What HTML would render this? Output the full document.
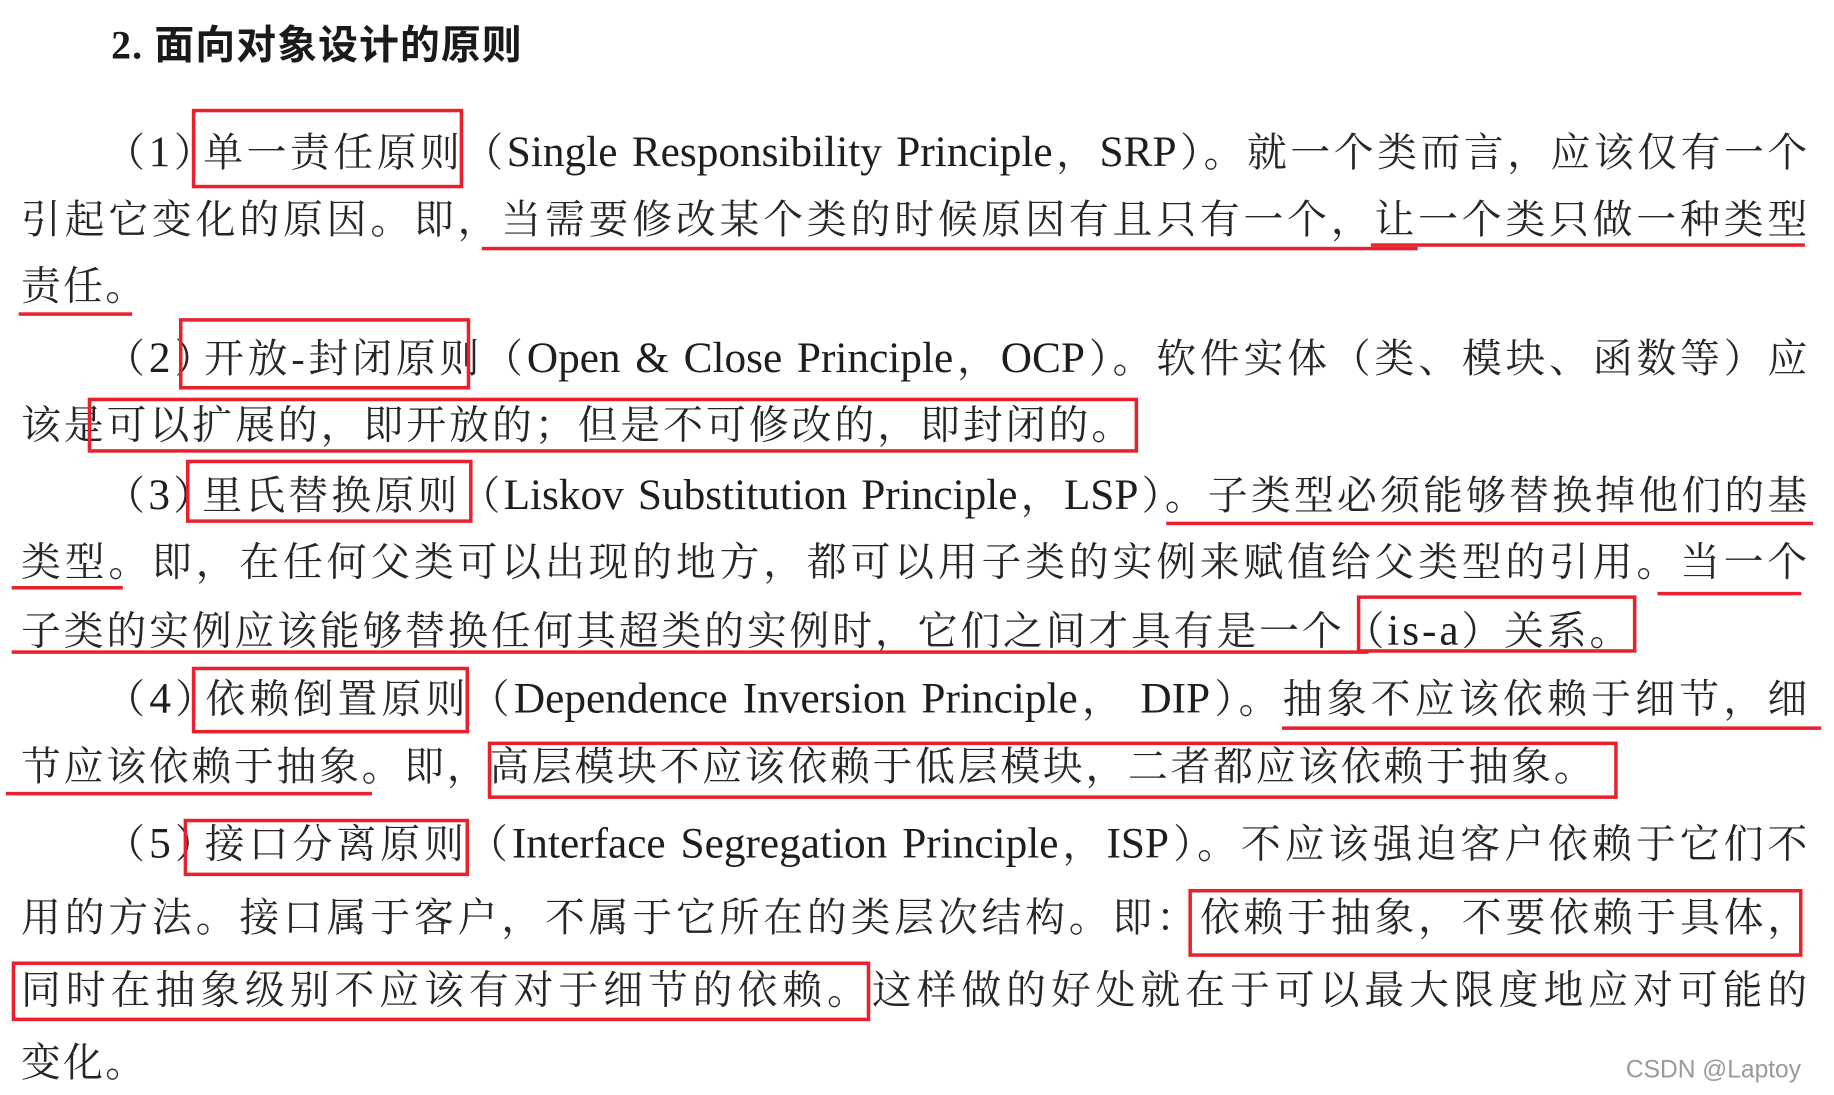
<!DOCTYPE html>
<html><head><meta charset="utf-8"><style>
html,body{margin:0;padding:0;background:#fff;width:1834px;height:1095px;overflow:hidden}
#s{position:absolute;left:0;top:0;width:1568px;height:936px;transform:scale(1.1697);transform-origin:0 0}
.l{position:absolute;font-family:"Liberation Serif","Noto Serif CJK SC",serif;font-size:34px;color:#262626;line-height:40px;white-space:nowrap;letter-spacing:0}
.j{text-align:justify;text-align-last:justify;white-space:normal;height:40px;overflow:visible}
.e{font-size:37px;color:#1e1e1e}
.p{margin-right:-12px}
.b{position:absolute;border:3px solid #e8222c;box-sizing:border-box}
.u{position:absolute;height:3px;background:#e8222c}
</style></head><body><div id="s">
<div class="l" style="left:95px;top:20px;font-weight:bold;font-size:34px;font-family:'Liberation Serif','Noto Sans CJK SC',serif;color:#1a1a1a;letter-spacing:1px">2. 面向对象设计的原则</div>

<div class="l j" style="left:90px;top:111px;width:1455px">（<span class="e">1</span><span class="p">）</span>单一责任原则（<span class="e">Single Responsibility Principle</span>，<span class="e">SRP</span>）。就一个类而言，应该仅有一个</div>
<div class="l j" style="left:18px;top:169px;width:1527px">引起它变化的原因。即，当需要修改某个类的时候原因有且只有一个，让一个类只做一种类型</div>
<div class="l" style="left:18px;top:226px;letter-spacing:2px">责任。</div>
<div class="l j" style="left:90px;top:287px;width:1455px">（<span class="e">2</span><span class="p">）</span>开放-封闭原则（<span class="e">Open &amp; Close Principle</span>，<span class="e">OCP</span>）。软件实体（类、模块、函数等）应</div>
<div class="l" style="left:18px;top:345px;letter-spacing:2.6px">该是可以扩展的，即开放的；但是不可修改的，即封闭的。</div>
<div class="l j" style="left:90px;top:404px;width:1455px">（<span class="e">3</span><span class="p">）</span>里氏替换原则（<span class="e">Liskov Substitution Principle</span>，<span class="e">LSP</span>）。子类型必须能够替换掉他们的基</div>
<div class="l j" style="left:18px;top:462px;width:1527px">类型。即，在任何父类可以出现的地方，都可以用子类的实例来赋值给父类型的引用。当一个</div>
<div class="l" style="left:18px;top:520px;letter-spacing:2.5px">子类的实例应该能够替换任何其超类的实例时，它们之间才具有是一个（<span class="e">is-a</span>）关系。</div>
<div class="l j" style="left:90px;top:578px;width:1455px">（<span class="e">4</span><span class="p">）</span>依赖倒置原则（<span class="e">Dependence Inversion Principle</span>， <span class="e">DIP</span>）。抽象不应该依赖于细节，细</div>
<div class="l" style="left:18px;top:637px;letter-spacing:2.4px">节应该依赖于抽象。即，高层模块不应该依赖于低层模块，二者都应该依赖于抽象。</div>
<div class="l j" style="left:90px;top:702px;width:1455px">（<span class="e">5</span><span class="p">）</span>接口分离原则（<span class="e">Interface Segregation Principle</span>，<span class="e">ISP</span>）。不应该强迫客户依赖于它们不</div>
<div class="l j" style="left:18px;top:766px;width:1527px">用的方法。接口属于客户，不属于它所在的类层次结构。即：依赖于抽象，不要依赖于具体，</div>
<div class="l j" style="left:18px;top:828px;width:1527px">同时在抽象级别不应该有对于细节的依赖。这样做的好处就在于可以最大限度地应对可能的</div>
<div class="l" style="left:18px;top:890px;letter-spacing:2px">变化。</div>

<div class="l" style="left:1390px;top:895px;font-family:'Liberation Sans',sans-serif;font-size:21px;color:#9a9a9a;letter-spacing:0">CSDN @Laptoy</div>

<div class="b" style="left:164px;top:93px;width:232px;height:68px"></div>
<div class="u" style="left:412px;top:211px;width:800px"></div>
<div class="u" style="left:1172px;top:208px;width:371px"></div>
<div class="u" style="left:16px;top:267px;width:97px"></div>
<div class="b" style="left:153px;top:272px;width:249px;height:61px"></div>
<div class="b" style="left:75px;top:340px;width:898px;height:47px"></div>
<div class="b" style="left:159px;top:393px;width:245px;height:54px"></div>
<div class="u" style="left:997px;top:446px;width:553px"></div>
<div class="u" style="left:10px;top:501px;width:95px"></div>
<div class="u" style="left:1417px;top:506px;width:123px"></div>
<div class="u" style="left:10px;top:556px;width:1160px"></div>
<div class="b" style="left:1160px;top:509px;width:239px;height:49px"></div>
<div class="b" style="left:164px;top:570px;width:237px;height:57px"></div>
<div class="u" style="left:1096px;top:621px;width:461px"></div>
<div class="b" style="left:417px;top:634px;width:966px;height:49px"></div>
<div class="u" style="left:5px;top:677px;width:313px"></div>
<div class="b" style="left:157px;top:700px;width:244px;height:49px"></div>
<div class="b" style="left:1016px;top:760px;width:525px;height:58px"></div>
<div class="b" style="left:10px;top:822px;width:734px;height:51px"></div>
</div></body></html>
